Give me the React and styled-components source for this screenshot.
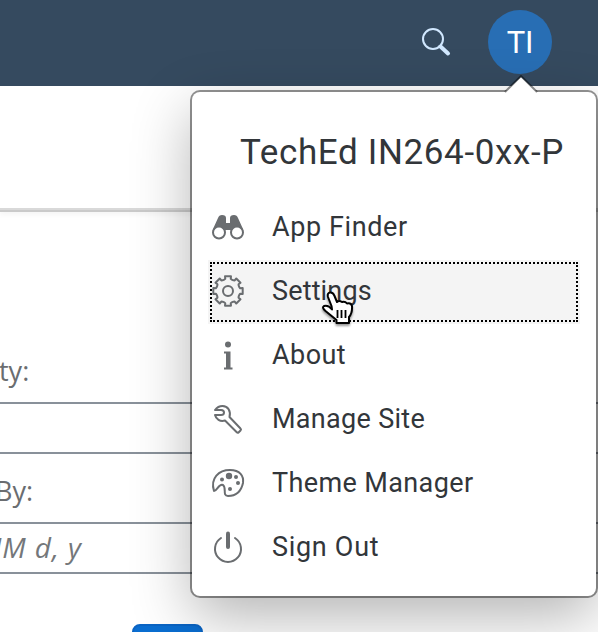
import React from "react";
import styled, { createGlobalStyle, css } from "styled-components";

const GlobalStyle = createGlobalStyle`
  * { box-sizing: border-box; }
  body { margin: 0; background: #fff; overflow: hidden; }
`;

const Page = styled.div`
  position: relative;
  width: 598px;
  height: 632px;
  overflow: hidden;
  background: #fff;
  font-family: Roboto, "Liberation Sans", sans-serif;
  color: #32363a;
`;

const ShellBar = styled.header`
  display: flex;
  align-items: center;
  justify-content: flex-end;
  gap: 36px;
  height: 86px;
  padding: 0 46px 2px 0;
  background: #354a5f;
`;

const Avatar = styled.div`
  display: flex;
  align-items: center;
  justify-content: center;
  width: 64px;
  height: 64px;
  border-radius: 50%;
  background: #286eb4;
  color: #fff;
  font-size: 31px;
  letter-spacing: -0.2px;
`;

const SearchSvg = styled.svg`
  display: block;
  width: 32px;
  height: 32px;
`;

const PageHeader = styled.div`
  height: 126px;
  border-bottom: 2px solid #cacaca;
  box-shadow: inset 0 -2px 0 #d9d9d9, 0 3px 5px rgba(0, 0, 0, 0.04);
`;

const Form = styled.main`
  display: flex;
  flex-direction: column;
  padding-top: 142px;
`;

const FieldLabel = styled.label`
  height: 48px;
  line-height: 34px;
  font-family: "Open Sans", "Noto Sans", sans-serif;
  font-size: 27px;
  color: #6a6d70;
  margin-left: ${(p) => p.$shift}px;
  white-space: nowrap;
`;

const Field = styled.div`
  height: 52px;
  margin-bottom: ${(p) => (p.$last ? 50 : 20)}px;
  border: solid #89919a;
  border-width: 2px 0;
  line-height: 46px;
  font-family: "Open Sans", "Noto Sans", sans-serif;
  font-size: 28px;
  font-style: italic;
  letter-spacing: 0.9px;
  color: #74777a;
  text-indent: -22px;
  white-space: nowrap;
`;

const GoButton = styled.button`
  width: 71px;
  height: 52px;
  margin-left: 132px;
  border: 2px solid #0a64c4;
  border-radius: 8px;
  background: #0a6ed1;
`;

const Popover = styled.section`
  position: absolute;
  left: 192px;
  top: 92px;
  width: 404px;
  height: 504px;
  padding: 33px 16px 0;
  border-radius: 8px;
  background: #fff;
  box-shadow: 0 0 0 2px rgba(0, 0, 0, 0.42), 0 20px 60px rgba(0, 0, 0, 0.3);
`;

const Arrow = styled.svg`
  position: absolute;
  left: 312px;
  top: -17px;
  width: 34px;
  height: 19px;
`;

const Title = styled.h1`
  margin: 0 0 15px 32px;
  height: 56px;
  line-height: 56px;
  font-size: 35px;
  font-weight: 400;
  letter-spacing: 0.63px;
  white-space: nowrap;
`;

const Menu = styled.ul`
  display: flex;
  flex-direction: column;
  margin: 0;
  padding: 0;
  list-style: none;
`;

const MenuItem = styled.li`
  display: flex;
  align-items: center;
  gap: 28px;
  height: 64px;
  padding: 0 0 2px 4px;
  font-size: 27px;
  ${(p) =>
    p.$active &&
    css`
      background: #f4f4f4;
      outline: 2px dotted #000;
      outline-offset: -4px;
    `}
`;

const Icon = styled.svg`
  flex: none;
  width: 32px;
  height: 34px;
  overflow: visible;
  fill: none;
  stroke: #6a6d70;
  stroke-width: 2;
  stroke-linejoin: round;
  stroke-linecap: round;
`;

const ItemText = styled.span`
  letter-spacing: ${(p) => p.$spacing}px;
  white-space: nowrap;
`;

const Cursor = styled.svg`
  position: absolute;
  left: 319px;
  top: 288px;
  width: 38px;
  height: 42px;
  filter: drop-shadow(0 2px 1px rgba(0, 0, 0, 0.4));
`;

const Binoculars = () => (
  <Icon viewBox="0 0 32 34">
    <path d="M1 19L6 8Q7 5 10 5Q14 5 14 8V13H18V8Q18 5 22 5Q25 5 26 8L31 19L26 23L19 20H13L6 23Z" fill="#6a6d70" stroke="none" />
    <circle cx="7" cy="22.500" r="6" fill="#fff" />
    <circle cx="25" cy="22.500" r="6" fill="#fff" />
  </Icon>
);

const gearPath = (() => {
  const points = [];
  for (let i = 0; i < 8; i += 1) {
    [[-0.31, 12], [-0.22, 12.5], [-0.2, 15], [0.2, 15], [0.22, 12.5], [0.31, 12]].forEach(([offset, radius]) => {
      const angle = (i * Math.PI) / 4 + offset;
      points.push(`${(16 + radius * Math.sin(angle)).toFixed(2)} ${(17 - radius * Math.cos(angle)).toFixed(2)}`);
    });
  }
  return `M${points.join("L")}Z`;
})();

const Gear = () => (
  <Icon viewBox="0 0 32 34">
    <path d={gearPath} />
    <circle cx="16" cy="17" r="5" />
  </Icon>
);

const Info = () => (
  <Icon viewBox="0 0 32 34">
    <circle cx="16" cy="6.500" r="3" fill="#6a6d70" stroke="none" />
    <path d="M12 13.500H18.500V29.500H20.500V31.500H12V29.500H14V15.500H12Z" fill="#6a6d70" stroke="none" />
  </Icon>
);

const Wrench = () => (
  <Icon viewBox="0 0 32 34">
    <path d="M3 8Q6 4 10.500 4C16 4 19 9 17.500 15L28.500 26.500Q29.500 27.500 28.500 28.500L26.500 30.500Q25.500 31 24.500 30L13 18.500C8 20 4 17 3 13H9Q12 13 12 10.500Q12 8 9 8Z" />
  </Icon>
);

const Palette = () => (
  <Icon viewBox="0 0 32 34">
    <path d="M2 25C-2 12 7 4 18 4C28 4 32 10 31 17C29 26 23 30 16 30C10 30 15 22 11 19C7 17 5 25 2 25Z" />
    <g fill="#6a6d70" stroke="none">
      <circle cx="17" cy="10" r="3.200" />
      <circle cx="10" cy="13.500" r="2" />
      <circle cx="24" cy="11" r="2" />
      <circle cx="26" cy="17" r="2" />
      <circle cx="18" cy="23" r="2" />
    </g>
  </Icon>
);

const Power = () => (
  <Icon viewBox="0 0 32 34">
    <path d="M9 8A13 13 0 1 0 23 8" />
    <path d="M16 3.500V17" strokeWidth="4" />
  </Icon>
);

const items = [
  { text: "App Finder", icon: Binoculars, spacing: 0.6 },
  { text: "Settings", icon: Gear, spacing: 0.15, active: true },
  { text: "About", icon: Info, spacing: 0.45 },
  { text: "Manage Site", icon: Wrench, spacing: 0.3 },
  { text: "Theme Manager", icon: Palette, spacing: 0.38 },
  { text: "Sign Out", icon: Power, spacing: 0.7 },
];

export default function App() {
  return (
    <Page>
      <GlobalStyle />
      <ShellBar>
        <SearchSvg viewBox="0 0 32 32" fill="none" stroke="#d1e8ff" strokeLinecap="round">
          <circle cx="13" cy="13" r="10" strokeWidth="2" />
          <path d="M20.500 20.500L28 27.500" strokeWidth="4" />
        </SearchSvg>
        <Avatar>TI</Avatar>
      </ShellBar>
      <PageHeader />
      <Form>
        <FieldLabel $shift={-1}>ty:</FieldLabel>
        <Field />
        <FieldLabel $shift={-5}>By:</FieldLabel>
        <Field $last>MM d, y</Field>
        <GoButton aria-label="Go" />
      </Form>
      <Popover>
        <Arrow viewBox="0 0 34 19">
          <path d="M1 17L17 2L33 17V19H1Z" fill="#fff" />
          <path d="M1 17L17 1L33 17" fill="none" stroke="#000" strokeOpacity=".45" strokeWidth="2" />
        </Arrow>
        <Title>TechEd IN264-0xx-P</Title>
        <Menu>
          {items.map(({ text, icon: Glyph, spacing, active }) => (
            <MenuItem key={text} $active={active}>
              <Glyph />
              <ItemText $spacing={spacing}>{text}</ItemText>
            </MenuItem>
          ))}
        </Menu>
      </Popover>
      <Cursor viewBox="0 0 38 42">
        <path d="M12.500 18L9 9Q8 5 11 4.500Q14 4 15.500 8L18 14Q20 12 23 14Q26 13 28 15.500Q32 14.500 33 18Q33.500 25 30 29V35H17.500V32L6.500 23Q2.500 19.500 5 18Q9 16.500 13 21.500Z" fill="#fff" stroke="#000" strokeWidth="2" strokeLinejoin="round" />
        <path d="M18.500 22V30M22.500 22V30M26.500 22V30" stroke="#000" strokeWidth="1.800" />
      </Cursor>
    </Page>
  );
}
